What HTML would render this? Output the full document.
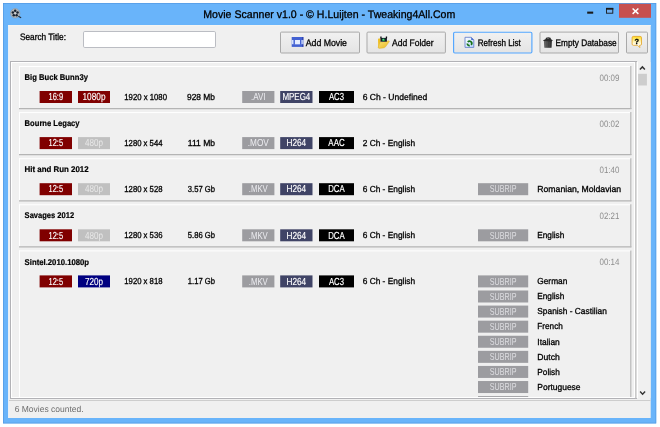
<!DOCTYPE html>
<html><head><meta charset="utf-8"><title>Movie Scanner</title>
<style>
html,body{margin:0;padding:0;background:#fff;width:660px;height:427px;overflow:hidden}
svg{display:block;will-change:transform;font-family:"Liberation Sans", sans-serif;}
text{white-space:pre;text-rendering:geometricPrecision}
</style></head><body>
<svg width="660" height="427" viewBox="0 0 660 427">
<defs>
<linearGradient id="bg" x1="0" y1="0" x2="0" y2="1"><stop offset="0" stop-color="#f1f1f1"/><stop offset="1" stop-color="#e4e4e4"/></linearGradient>
<linearGradient id="pg" x1="0" y1="0" x2="1" y2="1"><stop offset="0" stop-color="#ffffff"/><stop offset="1" stop-color="#b9d6ff"/></linearGradient>
<linearGradient id="tr" x1="0" y1="0" x2="1" y2="0"><stop offset="0" stop-color="#6a6a6a"/><stop offset="0.5" stop-color="#3a3a3a"/><stop offset="1" stop-color="#202020"/></linearGradient>
<linearGradient id="hp" x1="0" y1="0" x2="0" y2="1"><stop offset="0" stop-color="#ffd91a"/><stop offset="0.4" stop-color="#fff0a0"/><stop offset="0.75" stop-color="#fffef6"/></linearGradient>
<linearGradient id="fd" x1="0" y1="0" x2="1" y2="1"><stop offset="0" stop-color="#f9e27a"/><stop offset="1" stop-color="#e9b91f"/></linearGradient>
<clipPath id="clip"><rect x="12" y="63" width="622" height="334"/></clipPath>
</defs>
<rect x="3" y="3" width="653.2" height="420.4" fill="#69b4fa" />
<rect x="3.35" y="3.35" width="652.5" height="419.7" fill="none" stroke="#5499e2" stroke-width="0.7"/>
<rect x="8.3" y="25" width="642.4" height="393" fill="#f0f0f0" />
<rect x="8.3" y="25" width="0.8" height="393" fill="#f8f8f8" />
<rect x="8.3" y="25.1" width="642.4" height="1.1" fill="#f6f4f1" />
<text x="203.3" y="17.9" font-size="11" fill="#000" textLength="252" lengthAdjust="spacingAndGlyphs"  stroke="#000" stroke-width="0.3">Movie Scanner v1.0 - © H.Luijten - Tweaking4All.Com</text>
<g><circle cx="15.2" cy="13.3" r="4.7" fill="#b4b8bc" stroke="#8f959b" stroke-width="0.6"/><circle cx="15.20" cy="10.85" r="1.25" fill="#18222f"/><circle cx="17.53" cy="12.54" r="1.25" fill="#18222f"/><circle cx="16.64" cy="15.28" r="1.25" fill="#18222f"/><circle cx="13.76" cy="15.28" r="1.25" fill="#18222f"/><circle cx="12.87" cy="12.54" r="1.25" fill="#18222f"/><circle cx="15.2" cy="13.3" r="0.9" fill="#d4d4d4"/><path d="M18.8 16.5 L20.7 17.5" stroke="#222b36" stroke-width="1.2" stroke-linecap="round"/></g>
<rect x="619" y="3.8" width="32" height="14" fill="#c75050" />
<path d="M632.6 8.5 L638.4 13.9 M638.4 8.5 L632.6 13.9" stroke="#fff" stroke-width="1.45" fill="none"/>
<rect x="587.2" y="11.6" width="6" height="2.1" fill="#1a1a1a" />
<rect x="606.5" y="8.4" width="6.3" height="4.8" fill="#6fb0f2" stroke="#1a1a1a" stroke-width="0.9"/>
<rect x="606" y="7.9" width="7.3" height="1.8" fill="#1a1a1a" />
<text x="20" y="40" font-size="9.4" fill="#000" textLength="46" lengthAdjust="spacingAndGlyphs"  stroke="#000" stroke-width="0.3">Search Title:</text>
<rect x="83.5" y="31.5" width="132" height="16" fill="#fff" stroke="#bbbdc3" stroke-width="1" rx="1.3"/>
<rect x="280.5" y="32.1" width="79" height="20.9" fill="url(#bg)" stroke="#a9a9a9" stroke-width="1" rx="1"/>
<text x="305.7" y="45.7" font-size="9.5" fill="#000" textLength="41.3" lengthAdjust="spacingAndGlyphs"  stroke="#000" stroke-width="0.3">Add Movie</text>
<rect x="367.0" y="32.1" width="78.39999999999998" height="20.9" fill="url(#bg)" stroke="#a9a9a9" stroke-width="1" rx="1"/>
<text x="392" y="45.7" font-size="9.5" fill="#000" textLength="41.7" lengthAdjust="spacingAndGlyphs"  stroke="#000" stroke-width="0.3">Add Folder</text>
<rect x="453.6" y="32.2" width="78.3" height="20.8" fill="url(#bg)" stroke="#52a6ff" stroke-width="1.15" rx="1.2"/>
<text x="477.7" y="45.7" font-size="9.5" fill="#000" textLength="43.0" lengthAdjust="spacingAndGlyphs"  stroke="#000" stroke-width="0.3">Refresh List</text>
<rect x="540.0" y="32.1" width="78.5" height="20.9" fill="url(#bg)" stroke="#a9a9a9" stroke-width="1" rx="1"/>
<text x="555.6" y="45.7" font-size="9.5" fill="#000" textLength="61.0" lengthAdjust="spacingAndGlyphs"  stroke="#000" stroke-width="0.3">Empty Database</text>
<rect x="626.5" y="32.1" width="21" height="20.9" fill="url(#bg)" stroke="#a9a9a9" stroke-width="1" rx="1"/>
<g><rect x="291.7" y="37" width="11.6" height="9.9" fill="#4361d2"/><rect x="291.7" y="40" width="11.6" height="4.2" fill="#d3e0fc"/><rect x="293.5" y="39.5" width="1.4" height="5" fill="#4361d2"/><rect x="300" y="39.5" width="1.4" height="5" fill="#4361d2"/><rect x="295.1" y="40" width="4.8" height="4.2" fill="#e6eeff"/><rect x="302.6" y="37" width="0.7" height="3" fill="#141e8c"/><rect x="302.6" y="44.2" width="0.7" height="2.7" fill="#141e8c"/><rect x="302.6" y="40" width="0.7" height="4.2" fill="#7f92dc"/></g>
<g><path d="M378 39.4 Q378 38.6 378.8 38.6 H380.6 V46.8 L378.3 47.9 Z" fill="#efbf22"/><path d="M380 42.2 L389 40.7 Q389.7 40.9 389.2 41.8 L385.6 46.8 Q384.8 47.7 383.5 47.9 L379.2 48.4 Q378 48.3 378.2 47.2 Z" fill="url(#fd)" stroke="#dba820" stroke-width="0.4"/><rect x="380.5" y="37.9" width="6.4" height="3.8" fill="#171b29"/><rect x="380.3" y="36.5" width="1.3" height="1.8" fill="#0d0d12"/><rect x="385.8" y="36.5" width="1.3" height="1.8" fill="#0d0d12"/><circle cx="383.5" cy="39.9" r="1.35" fill="#17ad4e"/><circle cx="383.2" cy="39.6" r="0.55" fill="#8fe8b0"/></g>
<g><path d="M465 37.3 H471.2 L473.8 39.9 V47.4 H465 Z" fill="url(#pg)" stroke="#6a83cc" stroke-width="0.9"/><path d="M471.2 37.3 L473.8 39.9 H471.2 Z" fill="#4a6fd0"/><circle cx="469.5" cy="43.4" r="2.2" fill="none" stroke="#177217" stroke-width="1.7" stroke-dasharray="3.3 1.3" transform="rotate(-50 469.5 43.4)"/></g>
<g><path d="M543 41 Q543.3 39.7 545.4 39.3 L546.1 37.7 Q548.4 36.8 550.5 37.7 L551.1 39.3 Q552.6 39.7 552.8 41 Z" fill="#2c2c2c"/><path d="M543.9 41 H551.9 L551.5 47.8 H544.3 Z" fill="url(#tr)"/><path d="M545.9 41.6 V47.2 M547.9 41.6 V47.2 M549.9 41.6 V47.2" stroke="#7a7a7a" stroke-width="0.45"/><circle cx="548" cy="38.3" r="0.6" fill="#9a9a9a"/></g>
<g><path d="M633.4 36.4 H640.2 Q641.5 36.4 641.5 37.7 V44 Q641.5 45.3 640.2 45.3 H639.6 L639.8 47.6 L637.6 45.3 H633.4 Q632.1 45.3 632.1 44 V37.7 Q632.1 36.4 633.4 36.4 Z" fill="url(#hp)" stroke="#e3a21f" stroke-width="0.8"/><text x="636.8" y="43.6" font-size="7.4" font-weight="bold" text-anchor="middle" fill="#000" stroke="#000" stroke-width="0.3">?</text></g>
<rect x="10" y="61" width="627" height="338" fill="#f0f0f0" />
<line x1="10" y1="61.5" x2="637" y2="61.5" stroke="#b2b2b6" stroke-width="1" />
<line x1="10.5" y1="61" x2="10.5" y2="399" stroke="#b2b2b6" stroke-width="1" />
<line x1="11" y1="62.5" x2="637" y2="62.5" stroke="#fff" stroke-width="1" />
<line x1="11.5" y1="62" x2="11.5" y2="399" stroke="#fff" stroke-width="1" />
<line x1="10" y1="398.5" x2="637" y2="398.5" stroke="#b2b2b6" stroke-width="1" />
<line x1="11" y1="397.5" x2="637" y2="397.5" stroke="#fff" stroke-width="1" />
<line x1="634.5" y1="63" x2="634.5" y2="398" stroke="#fff" stroke-width="1" />
<line x1="635.5" y1="62" x2="635.5" y2="398" stroke="#c8c8c8" stroke-width="1" />
<line x1="636.5" y1="62" x2="636.5" y2="398" stroke="#dcdcdc" stroke-width="1" />
<line x1="637.5" y1="62" x2="637.5" y2="398" stroke="#fff" stroke-width="1" />
<rect x="638" y="62" width="12.5" height="336" fill="#f0f0f0" />
<path d="M639.9 69.6 L642.4 66.9 L644.9 69.6" stroke="#333" stroke-width="1.4" fill="none"/>
<path d="M640.1 391.6 L642.6 394.2 L645.1 391.6" stroke="#333" stroke-width="1.4" fill="none"/>
<rect x="638.1" y="73.8" width="8.8" height="11.7" fill="#cdcdcd" />
<g clip-path="url(#clip)">
<line x1="19" y1="66.5" x2="631" y2="66.5" stroke="#fff" stroke-width="1" />
<line x1="19.5" y1="66.0" x2="19.5" y2="109.0" stroke="#fff" stroke-width="1" />
<line x1="19" y1="108.6" x2="631.4" y2="108.6" stroke="#b4b4b4" stroke-width="1.2" />
<line x1="630.8" y1="66.0" x2="630.8" y2="109.0" stroke="#b8b8b8" stroke-width="1.2" />
<text x="24.6" y="80.1" font-size="8.3" fill="#000" font-weight="bold" textLength="63.3" lengthAdjust="spacingAndGlyphs"  stroke="#000" stroke-width="0.2">Big Buck Bunn3y</text>
<text x="619.3" y="80.7" font-size="9.2" fill="#8c8c8c" text-anchor="end" textLength="19.8" lengthAdjust="spacingAndGlyphs" >00:09</text>
<rect x="39.6" y="91.0" width="32.4" height="12" fill="#800000" />
<text x="55.8" y="100.2" font-size="10.2" fill="#fff" text-anchor="middle" textLength="14.5" lengthAdjust="spacingAndGlyphs" stroke="#fff" stroke-width="0.15">16:9</text>
<rect x="78" y="91.0" width="32" height="12" fill="#800000" />
<text x="94.0" y="100.2" font-size="10.2" fill="#fff" text-anchor="middle" textLength="23" lengthAdjust="spacingAndGlyphs" stroke="#fff" stroke-width="0.15">1080p</text>
<text x="124.3" y="99.8" font-size="8.7" fill="#000" textLength="42.7" lengthAdjust="spacingAndGlyphs"  stroke="#000" stroke-width="0.3">1920 x 1080</text>
<text x="187" y="99.8" font-size="8.7" fill="#000" textLength="28" lengthAdjust="spacingAndGlyphs"  stroke="#000" stroke-width="0.3">928 Mb</text>
<rect x="242.2" y="91.0" width="32.19999999999999" height="12" fill="#9c9ca0" />
<text x="258.29999999999995" y="100.2" font-size="10.2" fill="#ececf0" text-anchor="middle" textLength="14.6" lengthAdjust="spacingAndGlyphs" >.AVI</text>
<rect x="280.2" y="91.0" width="32.30000000000001" height="12" fill="#404466" />
<text x="296.35" y="100.2" font-size="10.2" fill="#fff" text-anchor="middle" textLength="27.9" lengthAdjust="spacingAndGlyphs" stroke="#fff" stroke-width="0.15">MPEG4</text>
<rect x="319" y="91.0" width="35" height="12" fill="#000" />
<text x="336.5" y="100.2" font-size="10.2" fill="#fff" text-anchor="middle" textLength="15.1" lengthAdjust="spacingAndGlyphs" stroke="#fff" stroke-width="0.15">AC3</text>
<text x="362.7" y="99.8" font-size="8.7" fill="#000" textLength="64.6" lengthAdjust="spacingAndGlyphs"  stroke="#000" stroke-width="0.3">6 Ch - Undefined</text>
<line x1="19" y1="112.6" x2="631" y2="112.6" stroke="#fff" stroke-width="1" />
<line x1="19.5" y1="112.1" x2="19.5" y2="155.1" stroke="#fff" stroke-width="1" />
<line x1="19" y1="154.7" x2="631.4" y2="154.7" stroke="#b4b4b4" stroke-width="1.2" />
<line x1="630.8" y1="112.1" x2="630.8" y2="155.1" stroke="#b8b8b8" stroke-width="1.2" />
<text x="24.6" y="126.19999999999999" font-size="8.3" fill="#000" font-weight="bold" textLength="55" lengthAdjust="spacingAndGlyphs"  stroke="#000" stroke-width="0.2">Bourne Legacy</text>
<text x="619.3" y="126.8" font-size="9.2" fill="#8c8c8c" text-anchor="end" textLength="19.8" lengthAdjust="spacingAndGlyphs" >00:02</text>
<rect x="39.6" y="137.1" width="32.4" height="12" fill="#800000" />
<text x="55.8" y="146.29999999999998" font-size="10.2" fill="#fff" text-anchor="middle" textLength="14.5" lengthAdjust="spacingAndGlyphs" stroke="#fff" stroke-width="0.15">12:5</text>
<rect x="78" y="137.1" width="32" height="12" fill="#c0c0c0" />
<text x="94.0" y="146.29999999999998" font-size="10.2" fill="#e8e8e8" text-anchor="middle" textLength="18" lengthAdjust="spacingAndGlyphs" >480p</text>
<text x="124.3" y="145.89999999999998" font-size="8.7" fill="#000" textLength="38.2" lengthAdjust="spacingAndGlyphs"  stroke="#000" stroke-width="0.3">1280 x 544</text>
<text x="187.8" y="145.89999999999998" font-size="8.7" fill="#000" textLength="27.2" lengthAdjust="spacingAndGlyphs"  stroke="#000" stroke-width="0.3">111 Mb</text>
<rect x="242.2" y="137.1" width="32.19999999999999" height="12" fill="#9c9ca0" />
<text x="258.29999999999995" y="146.29999999999998" font-size="10.2" fill="#ececf0" text-anchor="middle" textLength="21" lengthAdjust="spacingAndGlyphs" >.MOV</text>
<rect x="280.2" y="137.1" width="32.30000000000001" height="12" fill="#404466" />
<text x="296.35" y="146.29999999999998" font-size="10.2" fill="#fff" text-anchor="middle" textLength="19.7" lengthAdjust="spacingAndGlyphs" stroke="#fff" stroke-width="0.15">H264</text>
<rect x="319" y="137.1" width="35" height="12" fill="#000" />
<text x="336.5" y="146.29999999999998" font-size="10.2" fill="#fff" text-anchor="middle" textLength="16.3" lengthAdjust="spacingAndGlyphs" stroke="#fff" stroke-width="0.15">AAC</text>
<text x="362.7" y="145.89999999999998" font-size="8.7" fill="#000" textLength="52.4" lengthAdjust="spacingAndGlyphs"  stroke="#000" stroke-width="0.3">2 Ch - English</text>
<line x1="19" y1="158.7" x2="631" y2="158.7" stroke="#fff" stroke-width="1" />
<line x1="19.5" y1="158.2" x2="19.5" y2="201.2" stroke="#fff" stroke-width="1" />
<line x1="19" y1="200.79999999999998" x2="631.4" y2="200.79999999999998" stroke="#b4b4b4" stroke-width="1.2" />
<line x1="630.8" y1="158.2" x2="630.8" y2="201.2" stroke="#b8b8b8" stroke-width="1.2" />
<text x="24.6" y="172.29999999999998" font-size="8.3" fill="#000" font-weight="bold" textLength="64" lengthAdjust="spacingAndGlyphs"  stroke="#000" stroke-width="0.2">Hit and Run 2012</text>
<text x="619.3" y="172.89999999999998" font-size="9.2" fill="#8c8c8c" text-anchor="end" textLength="19.8" lengthAdjust="spacingAndGlyphs" >01:40</text>
<rect x="39.6" y="183.2" width="32.4" height="12" fill="#800000" />
<text x="55.8" y="192.39999999999998" font-size="10.2" fill="#fff" text-anchor="middle" textLength="14.5" lengthAdjust="spacingAndGlyphs" stroke="#fff" stroke-width="0.15">12:5</text>
<rect x="78" y="183.2" width="32" height="12" fill="#c0c0c0" />
<text x="94.0" y="192.39999999999998" font-size="10.2" fill="#e8e8e8" text-anchor="middle" textLength="18" lengthAdjust="spacingAndGlyphs" >480p</text>
<text x="124.3" y="192.0" font-size="8.7" fill="#000" textLength="38.2" lengthAdjust="spacingAndGlyphs"  stroke="#000" stroke-width="0.3">1280 x 528</text>
<text x="187.8" y="192.0" font-size="8.7" fill="#000" textLength="27.2" lengthAdjust="spacingAndGlyphs"  stroke="#000" stroke-width="0.3">3.57 Gb</text>
<rect x="242.2" y="183.2" width="32.19999999999999" height="12" fill="#9c9ca0" />
<text x="258.29999999999995" y="192.39999999999998" font-size="10.2" fill="#ececf0" text-anchor="middle" textLength="19" lengthAdjust="spacingAndGlyphs" >.MKV</text>
<rect x="280.2" y="183.2" width="32.30000000000001" height="12" fill="#404466" />
<text x="296.35" y="192.39999999999998" font-size="10.2" fill="#fff" text-anchor="middle" textLength="19.7" lengthAdjust="spacingAndGlyphs" stroke="#fff" stroke-width="0.15">H264</text>
<rect x="319" y="183.2" width="35" height="12" fill="#000" />
<text x="336.5" y="192.39999999999998" font-size="10.2" fill="#fff" text-anchor="middle" textLength="16.6" lengthAdjust="spacingAndGlyphs" stroke="#fff" stroke-width="0.15">DCA</text>
<text x="362.7" y="192.0" font-size="8.7" fill="#000" textLength="52.4" lengthAdjust="spacingAndGlyphs"  stroke="#000" stroke-width="0.3">6 Ch - English</text>
<rect x="478" y="183.2" width="50.200000000000045" height="12" fill="#9c9ca0" />
<text x="503.1" y="192.39999999999998" font-size="10.2" fill="#dedee2" text-anchor="middle" textLength="26.75" lengthAdjust="spacingAndGlyphs" >SUBRIP</text>
<text x="537.3" y="192.0" font-size="8.7" fill="#000" textLength="83.75" lengthAdjust="spacingAndGlyphs"  stroke="#000" stroke-width="0.3">Romanian, Moldavian</text>
<line x1="19" y1="204.8" x2="631" y2="204.8" stroke="#fff" stroke-width="1" />
<line x1="19.5" y1="204.3" x2="19.5" y2="247.3" stroke="#fff" stroke-width="1" />
<line x1="19" y1="246.9" x2="631.4" y2="246.9" stroke="#b4b4b4" stroke-width="1.2" />
<line x1="630.8" y1="204.3" x2="630.8" y2="247.3" stroke="#b8b8b8" stroke-width="1.2" />
<text x="24.6" y="218.4" font-size="8.3" fill="#000" font-weight="bold" textLength="49.5" lengthAdjust="spacingAndGlyphs"  stroke="#000" stroke-width="0.2">Savages 2012</text>
<text x="619.3" y="219.0" font-size="9.2" fill="#8c8c8c" text-anchor="end" textLength="19.8" lengthAdjust="spacingAndGlyphs" >02:21</text>
<rect x="39.6" y="229.3" width="32.4" height="12" fill="#800000" />
<text x="55.8" y="238.5" font-size="10.2" fill="#fff" text-anchor="middle" textLength="14.5" lengthAdjust="spacingAndGlyphs" stroke="#fff" stroke-width="0.15">12:5</text>
<rect x="78" y="229.3" width="32" height="12" fill="#c0c0c0" />
<text x="94.0" y="238.5" font-size="10.2" fill="#e8e8e8" text-anchor="middle" textLength="18" lengthAdjust="spacingAndGlyphs" >480p</text>
<text x="124.3" y="238.10000000000002" font-size="8.7" fill="#000" textLength="38.2" lengthAdjust="spacingAndGlyphs"  stroke="#000" stroke-width="0.3">1280 x 536</text>
<text x="187.8" y="238.10000000000002" font-size="8.7" fill="#000" textLength="27.2" lengthAdjust="spacingAndGlyphs"  stroke="#000" stroke-width="0.3">5.86 Gb</text>
<rect x="242.2" y="229.3" width="32.19999999999999" height="12" fill="#9c9ca0" />
<text x="258.29999999999995" y="238.5" font-size="10.2" fill="#ececf0" text-anchor="middle" textLength="19" lengthAdjust="spacingAndGlyphs" >.MKV</text>
<rect x="280.2" y="229.3" width="32.30000000000001" height="12" fill="#404466" />
<text x="296.35" y="238.5" font-size="10.2" fill="#fff" text-anchor="middle" textLength="19.7" lengthAdjust="spacingAndGlyphs" stroke="#fff" stroke-width="0.15">H264</text>
<rect x="319" y="229.3" width="35" height="12" fill="#000" />
<text x="336.5" y="238.5" font-size="10.2" fill="#fff" text-anchor="middle" textLength="16.6" lengthAdjust="spacingAndGlyphs" stroke="#fff" stroke-width="0.15">DCA</text>
<text x="362.7" y="238.10000000000002" font-size="8.7" fill="#000" textLength="52.4" lengthAdjust="spacingAndGlyphs"  stroke="#000" stroke-width="0.3">6 Ch - English</text>
<rect x="478" y="229.3" width="50.200000000000045" height="12" fill="#9c9ca0" />
<text x="503.1" y="238.5" font-size="10.2" fill="#dedee2" text-anchor="middle" textLength="26.75" lengthAdjust="spacingAndGlyphs" >SUBRIP</text>
<text x="537.3" y="238.10000000000002" font-size="8.7" fill="#000" textLength="27" lengthAdjust="spacingAndGlyphs"  stroke="#000" stroke-width="0.3">English</text>
<line x1="19" y1="250.9" x2="631" y2="250.9" stroke="#fff" stroke-width="1" />
<line x1="19.5" y1="250.4" x2="19.5" y2="450.4" stroke="#fff" stroke-width="1" />
<line x1="19" y1="450.0" x2="631.4" y2="450.0" stroke="#b4b4b4" stroke-width="1.2" />
<line x1="630.8" y1="250.4" x2="630.8" y2="450.4" stroke="#b8b8b8" stroke-width="1.2" />
<text x="24.6" y="264.5" font-size="8.3" fill="#000" font-weight="bold" textLength="64.5" lengthAdjust="spacingAndGlyphs"  stroke="#000" stroke-width="0.2">Sintel.2010.1080p</text>
<text x="619.3" y="265.1" font-size="9.2" fill="#8c8c8c" text-anchor="end" textLength="19.8" lengthAdjust="spacingAndGlyphs" >00:14</text>
<rect x="39.6" y="275.4" width="32.4" height="12" fill="#800000" />
<text x="55.8" y="284.59999999999997" font-size="10.2" fill="#fff" text-anchor="middle" textLength="14.5" lengthAdjust="spacingAndGlyphs" stroke="#fff" stroke-width="0.15">12:5</text>
<rect x="78" y="275.4" width="32" height="12" fill="#000080" />
<text x="94.0" y="284.59999999999997" font-size="10.2" fill="#fff" text-anchor="middle" textLength="18" lengthAdjust="spacingAndGlyphs" stroke="#fff" stroke-width="0.15">720p</text>
<text x="124.3" y="284.2" font-size="8.7" fill="#000" textLength="38.2" lengthAdjust="spacingAndGlyphs"  stroke="#000" stroke-width="0.3">1920 x 818</text>
<text x="187.8" y="284.2" font-size="8.7" fill="#000" textLength="27.2" lengthAdjust="spacingAndGlyphs"  stroke="#000" stroke-width="0.3">1.17 Gb</text>
<rect x="242.2" y="275.4" width="32.19999999999999" height="12" fill="#9c9ca0" />
<text x="258.29999999999995" y="284.59999999999997" font-size="10.2" fill="#ececf0" text-anchor="middle" textLength="19" lengthAdjust="spacingAndGlyphs" >.MKV</text>
<rect x="280.2" y="275.4" width="32.30000000000001" height="12" fill="#404466" />
<text x="296.35" y="284.59999999999997" font-size="10.2" fill="#fff" text-anchor="middle" textLength="19.7" lengthAdjust="spacingAndGlyphs" stroke="#fff" stroke-width="0.15">H264</text>
<rect x="319" y="275.4" width="35" height="12" fill="#000" />
<text x="336.5" y="284.59999999999997" font-size="10.2" fill="#fff" text-anchor="middle" textLength="15.1" lengthAdjust="spacingAndGlyphs" stroke="#fff" stroke-width="0.15">AC3</text>
<text x="362.7" y="284.2" font-size="8.7" fill="#000" textLength="52.4" lengthAdjust="spacingAndGlyphs"  stroke="#000" stroke-width="0.3">6 Ch - English</text>
<rect x="478" y="275.4" width="50.200000000000045" height="12" fill="#9c9ca0" />
<text x="503.1" y="284.59999999999997" font-size="10.2" fill="#dedee2" text-anchor="middle" textLength="26.75" lengthAdjust="spacingAndGlyphs" >SUBRIP</text>
<text x="537.3" y="284.2" font-size="8.7" fill="#000" textLength="30" lengthAdjust="spacingAndGlyphs"  stroke="#000" stroke-width="0.3">German</text>
<rect x="478" y="290.48999999999995" width="50.200000000000045" height="12" fill="#9c9ca0" />
<text x="503.1" y="299.68999999999994" font-size="10.2" fill="#dedee2" text-anchor="middle" textLength="26.75" lengthAdjust="spacingAndGlyphs" >SUBRIP</text>
<text x="537.3" y="299.28999999999996" font-size="8.7" fill="#000" textLength="27" lengthAdjust="spacingAndGlyphs"  stroke="#000" stroke-width="0.3">English</text>
<rect x="478" y="305.58" width="50.200000000000045" height="12" fill="#9c9ca0" />
<text x="503.1" y="314.78" font-size="10.2" fill="#dedee2" text-anchor="middle" textLength="26.75" lengthAdjust="spacingAndGlyphs" >SUBRIP</text>
<text x="537.3" y="314.38" font-size="8.7" fill="#000" textLength="69.5" lengthAdjust="spacingAndGlyphs"  stroke="#000" stroke-width="0.3">Spanish - Castilian</text>
<rect x="478" y="320.66999999999996" width="50.200000000000045" height="12" fill="#9c9ca0" />
<text x="503.1" y="329.86999999999995" font-size="10.2" fill="#dedee2" text-anchor="middle" textLength="26.75" lengthAdjust="spacingAndGlyphs" >SUBRIP</text>
<text x="537.3" y="329.46999999999997" font-size="8.7" fill="#000" textLength="25.5" lengthAdjust="spacingAndGlyphs"  stroke="#000" stroke-width="0.3">French</text>
<rect x="478" y="335.76" width="50.200000000000045" height="12" fill="#9c9ca0" />
<text x="503.1" y="344.96" font-size="10.2" fill="#dedee2" text-anchor="middle" textLength="26.75" lengthAdjust="spacingAndGlyphs" >SUBRIP</text>
<text x="537.3" y="344.56" font-size="8.7" fill="#000" textLength="22.5" lengthAdjust="spacingAndGlyphs"  stroke="#000" stroke-width="0.3">Italian</text>
<rect x="478" y="350.84999999999997" width="50.200000000000045" height="12" fill="#9c9ca0" />
<text x="503.1" y="360.04999999999995" font-size="10.2" fill="#dedee2" text-anchor="middle" textLength="26.75" lengthAdjust="spacingAndGlyphs" >SUBRIP</text>
<text x="537.3" y="359.65" font-size="8.7" fill="#000" textLength="22.5" lengthAdjust="spacingAndGlyphs"  stroke="#000" stroke-width="0.3">Dutch</text>
<rect x="478" y="365.93999999999994" width="50.200000000000045" height="12" fill="#9c9ca0" />
<text x="503.1" y="375.13999999999993" font-size="10.2" fill="#dedee2" text-anchor="middle" textLength="26.75" lengthAdjust="spacingAndGlyphs" >SUBRIP</text>
<text x="537.3" y="374.73999999999995" font-size="8.7" fill="#000" textLength="22.5" lengthAdjust="spacingAndGlyphs"  stroke="#000" stroke-width="0.3">Polish</text>
<rect x="478" y="381.03" width="50.200000000000045" height="12" fill="#9c9ca0" />
<text x="503.1" y="390.22999999999996" font-size="10.2" fill="#dedee2" text-anchor="middle" textLength="26.75" lengthAdjust="spacingAndGlyphs" >SUBRIP</text>
<text x="537.3" y="389.83" font-size="8.7" fill="#000" textLength="43.25" lengthAdjust="spacingAndGlyphs"  stroke="#000" stroke-width="0.3">Portuguese</text>
<rect x="478" y="396.12" width="50.200000000000045" height="12" fill="#9c9ca0" />
<text x="503.1" y="405.32" font-size="10.2" fill="#dedee2" text-anchor="middle" textLength="26.75" lengthAdjust="spacingAndGlyphs" >SUBRIP</text>
</g>
<line x1="9" y1="400.5" x2="650.5" y2="400.5" stroke="#cdcdcd" stroke-width="1" />
<text x="14.7" y="411.7" font-size="8.7" fill="#6d6d6d" textLength="69" lengthAdjust="spacingAndGlyphs" >6 Movies counted.</text>
</svg>
</body></html>
